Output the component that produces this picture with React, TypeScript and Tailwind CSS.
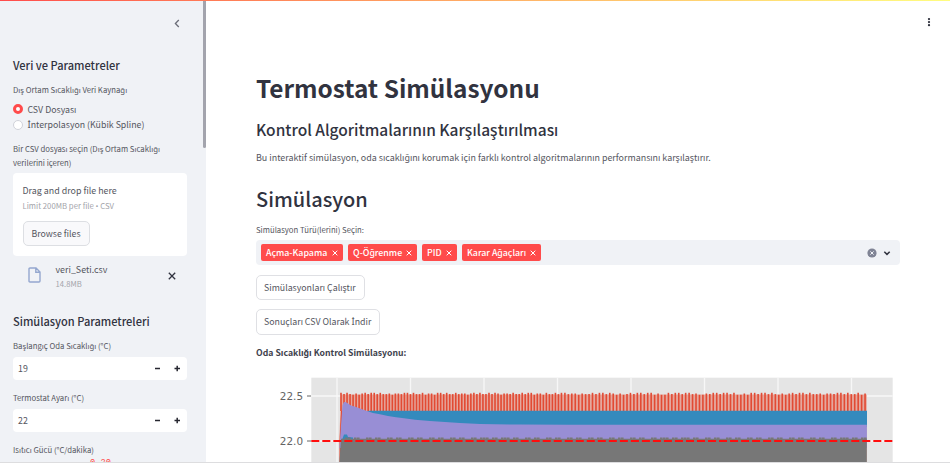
import type { ReactNode } from "react";

const teeth: number[] = [];
for (let x = 341; x < 867; x += x < 560 ? 3.02 : 3.45) teeth.push(x);

const bumps: number[] = [];
for (let i = 0; i < 175; i++) bumps.push(i);

function Chart() {
  return (
    <svg className="block shrink-0" width="694" height="93" viewBox="256 370 694 93">
      <rect x="311.3" y="377.7" width="581.4" height="86" fill="#e5e5e5" />
      <g stroke="#f7f7f7" strokeWidth="1.3">
        {[337, 410.5, 484, 557.5, 631, 704.5, 778, 851.5].map((x) => (
          <line key={x} x1={x} x2={x} y1="378" y2="463" />
        ))}
        <line x1="311.3" x2="892.7" y1="396" y2="396" />
        <line x1="311.3" x2="892.7" y1="441" y2="441" />
      </g>
      <path d="M339.6 430 L341 394.5 H866.8 V463 H339.6Z" fill="#e5a89e" />
      <g stroke="#e24a33" strokeWidth="1.6">
        {teeth.map((x, i) => (
          <line key={i} x1={x} x2={x} y1={392.8 + ((i * 7) % 11 > 5 ? 1.3 : 0) + (Math.floor(i / 4) % 3 === 1 ? 0.7 : 0)} y2="411" />
        ))}
      </g>
      <path d="M339.5 440 L341 411 H360 V463 H339.5Z" fill="#e24a33" />
      <path d="M342 450 L344 413 L370 410.8 H867 V427 H342Z" fill="#348abd" />
      <path
        d="M339.3 450 L341 425 L342.5 405 L344 402 L346 402.2 L351 405.5 L356 407 L362 409.3 L367 411 L373 413 L380 414.3 L388 416 L396 417.3 L404 418.2 L415 419.8 L430 421 L445 422 L460 423 L480 424 L520 424.6 L570 424.8 H866.9 V448 H339.3Z"
        fill="#988ed5"
      />
      <path d="M342 440 L344 434.5 L347 434.5 L348 437 L353 437.5 V440Z" fill="#348abd" />
      <path d="M339.3 463 L341 438.8 H866.8 V463Z" fill="#777" />
      {bumps.map((i) =>
        (i * 37 + Math.floor(i / 6) * 11) % 10 > 3 ? (
          <rect key={i} x={342 + i * 3} y={437.5} width="2.6" height="1.6" fill="#777" />
        ) : null,
      )}
      <line x1="311.3" x2="892.7" y1="441" y2="441" stroke="#ff0d0d" strokeWidth="2.2" strokeDasharray="8 3.02" />
      <g stroke="#666" strokeWidth="1">
        <line x1="307" x2="311" y1="396" y2="396" />
        <line x1="307" x2="311" y1="441" y2="441" />
      </g>
      <g className="font-['DejaVu_Sans']" fontSize="10.4" fill="#646464" textAnchor="end">
        <text x="303" y="400">22.5</text>
        <text x="303" y="445">22.0</text>
      </g>
    </svg>
  );
}

function Tag({ children, className }: { children: ReactNode; className: string }) {
  return (
    <span className={`flex h-[17px] items-center justify-between rounded-[2px] bg-[#ff4b4b] pl-[5px] pr-[5px] text-[8.8px] font-medium text-white ${className}`}>
      {children}
      <svg width="6" height="6" viewBox="0 0 6 6" stroke="#fff" strokeWidth="1">
        <path d="M0.7 0.7 5.3 5.3M5.3 0.7 0.7 5.3" />
      </svg>
    </span>
  );
}

function NumberInput({ value }: { value: string }) {
  return (
    <div className="flex h-[23px] w-[174px] shrink-0 items-center rounded-[4px] bg-white pl-[5px] pr-[6px] text-[8.8px]">
      <span className="grow">{value}</span>
      <svg width="27" height="7" viewBox="0 0 27 7" stroke="#262730" strokeWidth="1.5">
        <path d="M1 3.5H6M20.5 3.5H26M23.2 0.8V6.2" />
      </svg>
    </div>
  );
}

function DottedI() {
  return <span className="font-['Noto_Sans'] text-[9.4px] leading-none">İ</span>;
}

export default function App() {
  return (
    <div className="flex h-[463px] w-[950px] flex-col overflow-hidden bg-white font-['Noto_Sans_CJK_SC','Noto_Sans',sans-serif] text-[#555660]">
      <div className="h-px shrink-0 bg-linear-to-r from-[#ff4b4b] to-[#fffd80]" />
      <div className="flex h-[461px] shrink-0 overflow-hidden">
        <aside className="flex w-[206px] shrink-0 justify-between bg-[#f0f2f6]">
          <div className="flex w-[187px] flex-col whitespace-nowrap pl-[13px]">
            <div className="flex h-[54px] shrink-0 justify-end pr-[7px] pt-[18px]">
              <svg width="6" height="9" viewBox="0 0 6 9" fill="none" stroke="#6b6d78" strokeWidth="1.3">
                <path d="M4.8 1 1.4 4.5 4.8 8" />
              </svg>
            </div>
            <h2 className="h-[22px] shrink-0 text-[11.05px] font-medium leading-[21px] text-[#31333f]">Veri ve Parametreler</h2>
            <div className="h-[24px] shrink-0 text-[7.75px] leading-[26px]">Dış Ortam Sıcaklığı Veri Kaynağı</div>
            <div className="flex h-[16px] shrink-0 items-center gap-[4.5px] text-[8.8px]">
              <span className="size-[10px] rounded-full border-[3px] border-[#ff4b4b] bg-white" />
              <span className="pt-px">CSV Dosyası</span>
            </div>
            <div className="flex h-[16px] shrink-0 items-center gap-[4.5px] text-[8.8px]">
              <span className="size-[10px] rounded-full border border-[#d0d2d9] bg-white" />
              <span>
                <DottedI />
                nterpolasyon (Kübik Spline)
              </span>
            </div>
            <div className="h-[40px] shrink-0 pt-[9px] text-[7.75px] leading-[14px]">
              Bir CSV dosyası seçin (Dış Ortam Sıcaklığı
              <br />
              verilerini içeren)
            </div>
            <div className="flex h-[83px] w-[174px] shrink-0 flex-col items-start rounded-[4px] bg-white pl-[9.5px] pt-[10px]">
              <div className="h-[16px] text-[8.9px] leading-[16px]">Drag and drop file here</div>
              <div className="h-[22px] text-[7.75px] leading-[14px] text-[#a3a4aa]">
                Limit 200MB per file <span className="font-['Open_Sans'] leading-none">•</span> CSV
              </div>
              <div className="flex h-[25px] w-[67px] items-center justify-center rounded-[5px] border border-[#dddfe3] bg-[#f9f9fb] text-[8.8px]">Browse files</div>
            </div>
            <div className="flex h-[54px] shrink-0 pl-[15px] pt-[7px]">
              <svg className="mt-[4px]" width="13" height="16" viewBox="0 0 13 16" fill="none" stroke="#94a7cf" strokeWidth="1.4">
                <path d="M1 2Q1 1 2 1H8L12 5V14Q12 15 11 15H2Q1 15 1 14ZM7.8 1V5.2H12" />
              </svg>
              <div className="ml-[14.5px] w-[112px]">
                <div className="h-[14px] text-[8.9px] leading-[14px]">veri_Seti.csv</div>
                <div className="h-[14px] text-[7.7px] leading-[14px] text-[#a3a4aa]">14.8MB</div>
              </div>
              <svg className="mt-[9px]" width="8" height="8" viewBox="0 0 8 8" stroke="#31333f" strokeWidth="1.3">
                <path d="M0.8 0.8 7.2 7.2M7.2 0.8 0.8 7.2" />
              </svg>
            </div>
            <h2 className="h-[24px] shrink-0 text-[11.05px] font-medium leading-[22px] text-[#31333f]">Simülasyon Parametreleri</h2>
            <div className="h-[23px] shrink-0 text-[7.75px] leading-[24px]">Başlangıç Oda Sıcaklığı (°C)</div>
            <NumberInput value="19" />
            <div className="h-[29px] shrink-0 pt-[11px] text-[7.75px] leading-[14px]">Termostat Ayarı (°C)</div>
            <NumberInput value="22" />
            <div className="h-[25px] shrink-0 pt-[11px] text-[7.75px] leading-[14px]">Isıtıcı Gücü (°C/dakika)</div>
            <div className="h-[12px] shrink-0 pl-[77px] font-['Liberation_Mono'] text-[8.7px] leading-[13px] text-[#ff4b4b]">0.20</div>
          </div>
          <div className="h-[147px] w-[3.5px] rounded-b-[2px] bg-[#a3a4ad]" />
        </aside>
        <main className="flex grow flex-col items-start whitespace-nowrap pl-[50px] pt-[12px]">
          <div className="flex h-[57px] w-full shrink-0 justify-end pr-[19px] pt-[4px]">
            <svg width="4" height="10" viewBox="0 0 4 10" fill="#31333f">
              <circle cx="2" cy="2.1" r="1.15" />
              <circle cx="2" cy="5.1" r="1.15" />
              <circle cx="2" cy="8.2" r="1.15" />
            </svg>
          </div>
          <h1 className="h-[44px] shrink-0 text-[24.4px] font-bold leading-[36px] text-[#31333f]">Termostat Simülasyonu</h1>
          <h3 className="h-[30px] shrink-0 text-[15.5px] font-medium leading-[30px] text-[#31333f]">Kontrol Algoritmalarının Karşılaştırılması</h3>
          <p className="h-[40px] shrink-0 text-[8.91px] leading-[28px]">Bu interaktif simülasyon, oda sıcaklığını korumak için farklı kontrol algoritmalarının performansını karşılaştırır.</p>
          <h2 className="h-[39px] shrink-0 text-[20px] font-medium leading-[30px] text-[#31333f]">Simülasyon</h2>
          <div className="h-[17px] shrink-0 text-[7.75px] leading-[14px]">Simülasyon Türü(lerini) Seçin:</div>
          <div className="flex h-[25px] w-[644px] shrink-0 items-center gap-[5px] rounded-[4px] bg-[#f0f2f6] pl-[5px]">
            <Tag className="w-[82px]">Açma-Kapama</Tag>
            <Tag className="w-[69px]">Q-Öğrenme</Tag>
            <Tag className="w-[35px]">PID</Tag>
            <Tag className="w-[79px]">Karar Ağaçları</Tag>
            <svg className="ml-auto mr-[7px]" width="26" height="10" viewBox="0 0 26 10" fill="none">
              <circle cx="5" cy="5" r="4.6" fill="#808495" />
              <path d="M3.4 3.4 6.6 6.6M6.6 3.4 3.4 6.6" stroke="#f0f2f6" strokeWidth="1" />
              <path d="M17.3 3.7 20 6.4 22.7 3.7" stroke="#31333f" strokeWidth="1.5" />
            </svg>
          </div>
          <div className="mt-[10px] flex h-[25px] w-[109px] shrink-0 items-center rounded-[5px] border border-[#dfe0e4] pl-[7px] text-[8.8px]">Simülasyonları Çalıştır</div>
          <div className="mt-[9px] flex h-[26px] w-[124px] shrink-0 items-center rounded-[5px] border border-[#dfe0e4] pl-[7px] text-[8.8px]">
            <span>
              Sonuçları CSV Olarak <DottedI />
              ndir
            </span>
          </div>
          <div className="h-[35px] shrink-0 pt-[10px] text-[8.7px] font-bold leading-[16px] text-[#40424d]">Oda Sıcaklığı Kontrol Simülasyonu:</div>
          <Chart />
        </main>
      </div>
      <div className="h-px shrink-0 bg-[#dddddf]" />
    </div>
  );
}
